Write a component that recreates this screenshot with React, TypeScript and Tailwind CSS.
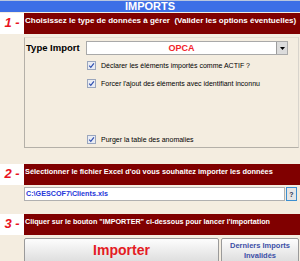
import React from "react";

const FONT = { fontFamily: '"Liberation Sans", Arial, sans-serif' };

function StepHeader({ num, text, size }: { num: string; text: string; size: string }) {
  return (
    <div className="flex h-[21px]">
      <div className="flex w-[24px] items-start justify-center bg-white pt-[3px] text-[13px] font-bold italic leading-none text-[#e8141e]">
        {num}
      </div>
      <div className={`flex-1 whitespace-pre bg-[#800000] pl-[1px] pt-[4px] font-bold leading-none text-white ${size}`}>
        {text}
      </div>
    </div>
  );
}

function Check({ label }: { label: string }) {
  return (
    <div className="flex h-[9px] items-center gap-[5px] pl-[62px]">
      <svg width="9" height="9" viewBox="0 0 9 9" className="shrink-0">
        <rect x="0.5" y="0.5" width="8" height="8" fill="#e9ecf3" stroke="#9aa6bd" />
        <path d="M2.2 4.6 L3.8 6.3 L6.9 2.4" fill="none" stroke="#2f4fb0" strokeWidth="1.2" />
      </svg>
      <span className="text-[7px] leading-none text-black">{label}</span>
    </div>
  );
}

export default function App() {
  return (
    <div className="h-[261px] w-[300px] overflow-hidden bg-[#f4ede0]" style={FONT}>
      {/* title */}
      <div className="flex h-[12px] items-center justify-center border-t border-[#b9c6de] bg-[#3d6fe6] text-[11px] font-bold leading-none text-white">
        IMPORTS
      </div>
      <div className="h-[1px]" />
      <StepHeader
        num="1 -"
        size="text-[8px]"
        text="Choisissez le type de données à gérer  (Valider les options éventuelles)"
      />

      {/* options panel */}
      <div className="ml-[24px] mt-[3px] h-[111px] w-[275px] border border-[#b4b0a8] border-r-[#d8d4cc] border-t-[#e4ded2]">
        <div className="mt-[3px] flex h-[14px] items-center">
          <span className="w-[61px] pl-[1px] text-[9.5px] font-bold leading-none text-black">Type Import</span>
          <div className="flex h-[14px] w-[202px] border border-[#a9a9a9] bg-white">
            <div className="flex flex-1 items-center justify-center text-[9px] font-bold leading-none text-[#f2242c]">
              OPCA
            </div>
            <div className="flex w-[11px] items-center justify-center border-l border-[#9c9c9c] bg-[#dcdcdc]">
              <svg width="5" height="3" viewBox="0 0 5 3">
                <path d="M0 0 H5 L2.5 3 Z" fill="#000" />
              </svg>
            </div>
          </div>
        </div>
        <div className="mt-[6px] flex flex-col">
          <Check label="Déclarer les éléments importés comme ACTIF ?" />
          <div className="h-[9px]" />
          <Check label="Forcer l'ajout des éléments avec identifiant inconnu" />
          <div className="h-[47px]" />
          <Check label="Purger la table des anomalies" />
        </div>
      </div>

      <div className="h-[16px]" />
      <StepHeader
        num="2 -"
        size="text-[7.4px]"
        text="Sélectionner le fichier Excel d'oû vous souhaitez importer les données"
      />
      <div className="ml-[24px] mt-[2px] flex h-[14px] w-[273px] gap-[1px]">
        <div className="flex flex-1 items-center border border-[#b0b0b0] bg-white pl-[1px] text-[7.2px] font-bold leading-none text-[#2436d8]">
          C:\GESCOF7\Clients.xls
        </div>
        <div className="flex w-[11px] items-center justify-center border border-[#3c8fd0] bg-[#e6e6e6] text-[7px] font-bold leading-none text-[#2a3550]">
          ?
        </div>
      </div>

      <div className="h-[13px]" />
      <StepHeader
        num="3 -"
        size="text-[7.2px]"
        text={'Cliquer sur le bouton "IMPORTER" ci-dessous pour lancer l\'importation'}
      />
      <div className="ml-[24px] mt-[3px] flex h-[26px] gap-[2px]">
        <button
          type="button"
          className="flex w-[195px] items-start justify-center rounded-[2px] border border-[#9a9a9a] bg-gradient-to-b from-[#fdfdfd] to-[#dcdcdc] pt-[4px] text-[14px] font-bold leading-none text-[#e41b23]"
        >
          Importer
        </button>
        <button
          type="button"
          className="flex w-[78px] flex-col items-center justify-start rounded-[2px] border border-[#9a9a9a] bg-gradient-to-b from-[#fdfdfd] to-[#dcdcdc] pt-[2px] text-[7.5px] font-bold leading-[10px] text-[#3b4fa6]"
        >
          <span>Derniers Imports</span>
          <span>Invalidés</span>
        </button>
      </div>
    </div>
  );
}
